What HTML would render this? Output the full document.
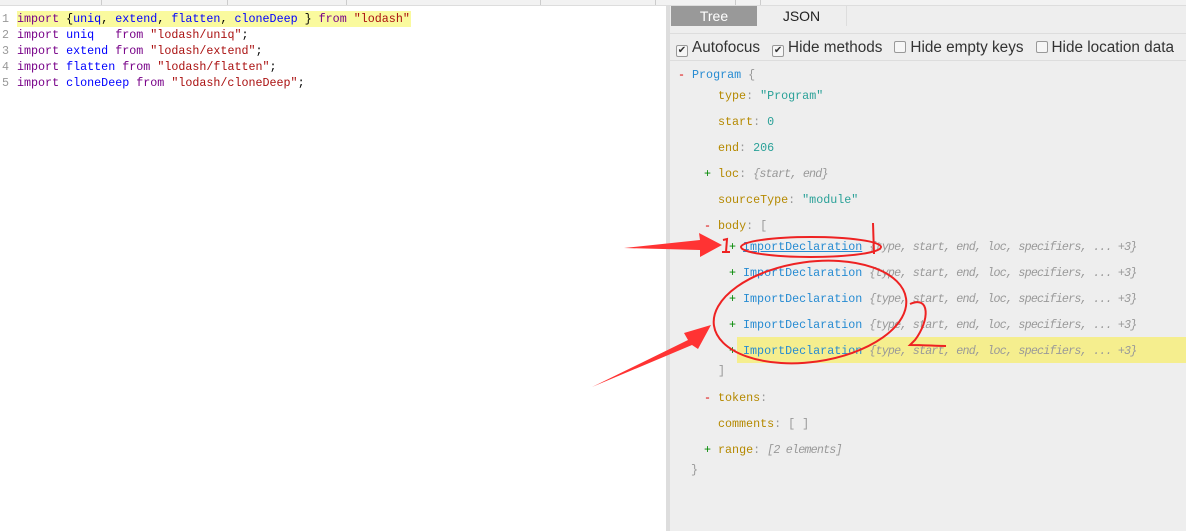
<!DOCTYPE html>
<html><head><meta charset="utf-8"><style>
*{margin:0;padding:0;box-sizing:border-box}
body{width:1186px;height:531px;position:relative;overflow:hidden;background:#fff;font-family:"Liberation Mono",monospace;font-size:11.7px}
.top{position:absolute;left:0;top:0;width:1186px;height:6px;background:#f2f2f2;border-bottom:1px solid #ddd}
.sep{position:absolute;top:0;width:1px;height:5px;background:#ccc}
.code{position:absolute;left:0;top:11px;width:666px}
.cl{height:16px;line-height:16px;white-space:pre;position:relative}
.ln{display:inline-block;width:17px;padding-left:2px;color:#999}
.k{color:#708}.v{color:#00f}.s{color:#a11}
.hl1{position:absolute;left:17px;top:0;width:394px;height:16px;background:#fafa9e}
.div{position:absolute;left:666px;top:6px;width:4px;height:525px;background:#ddd}
.right{position:absolute;left:670px;top:6px;width:516px;height:525px;background:#eee}
.tab{position:absolute;top:0;height:20px;line-height:20px;text-align:center;font-family:"Liberation Sans",sans-serif;font-size:14px}
.opts{position:absolute;left:0;top:27px;width:516px;height:28px;border-top:1px solid #ddd;border-bottom:1px solid #ddd;font-family:"Liberation Sans",sans-serif;font-size:15.3px;color:#333;line-height:28px;white-space:nowrap}
.cb{display:inline-block;width:12px;height:12px;border:1px solid #999;border-radius:2px;background:#f6f6f6;vertical-align:-1px;margin:0 4px 0 12px;position:relative;font-size:10px;line-height:10px;text-align:center;color:#333}
.cb.f{margin-left:6px}
.t{position:absolute;white-space:pre;line-height:16px}
.key{color:#b58900}.str{color:#2aa198}.n{color:#2aa198}.nm{color:#268bd2}.p{color:#999}.g{color:#999;font-style:italic;letter-spacing:-0.8px}
.m{color:#d00}.pl{color:#080}
</style></head><body>
<div class="top"></div>
<div class="sep" style="left:101px"></div><div class="sep" style="left:227px"></div><div class="sep" style="left:346px"></div><div class="sep" style="left:540px"></div><div class="sep" style="left:655px"></div><div class="sep" style="left:735px"></div><div class="sep" style="left:760px"></div>
<div class="code">
<div class="cl"><div class="hl1"></div><span style="position:relative"><span class="ln">1</span><span class="k">import</span> {<span class="v">uniq</span>, <span class="v">extend</span>, <span class="v">flatten</span>, <span class="v">cloneDeep</span> } <span class="k">from</span> <span class="s">"lodash"</span></span></div>
<div class="cl"><span class="ln">2</span><span class="k">import</span> <span class="v">uniq</span>   <span class="k">from</span> <span class="s">"lodash/uniq"</span>;</div>
<div class="cl"><span class="ln">3</span><span class="k">import</span> <span class="v">extend</span> <span class="k">from</span> <span class="s">"lodash/extend"</span>;</div>
<div class="cl"><span class="ln">4</span><span class="k">import</span> <span class="v">flatten</span> <span class="k">from</span> <span class="s">"lodash/flatten"</span>;</div>
<div class="cl"><span class="ln">5</span><span class="k">import</span> <span class="v">cloneDeep</span> <span class="k">from</span> <span class="s">"lodash/cloneDeep"</span>;</div>
</div>
<div class="div"></div>
<div class="right">
<div class="tab" style="left:1px;width:86px;background:#999;color:#fff">Tree</div>
<div class="tab" style="left:87px;width:90px;color:#222;border-right:1px solid #ddd">JSON</div>
<div class="opts"><span class="cb f">✔</span>Autofocus<span class="cb">✔</span>Hide methods<span class="cb"></span>Hide empty keys<span class="cb"></span>Hide location data</div>
<div style="position:absolute;left:67px;top:331px;width:449px;height:26px;background:#f5ee8e"></div>
</div>
<div class="t" style="left:678px;top:67px"><span class="m">-</span> <span class="nm">Program</span> <span class="p">{</span></div>
<div class="t" style="left:718px;top:88px"><span class="key">type</span><span class="p">:</span> <span class="str">"Program"</span></div>
<div class="t" style="left:718px;top:114px"><span class="key">start</span><span class="p">:</span> <span class="n">0</span></div>
<div class="t" style="left:718px;top:140px"><span class="key">end</span><span class="p">:</span> <span class="n">206</span></div>
<div class="t" style="left:704px;top:166px"><span class="pl">+</span> <span class="key">loc</span><span class="p">:</span> <span class="g">{start, end}</span></div>
<div class="t" style="left:718px;top:192px"><span class="key">sourceType</span><span class="p">:</span> <span class="str">"module"</span></div>
<div class="t" style="left:704px;top:218px"><span class="m">-</span> <span class="key">body</span><span class="p">:</span> <span class="p">[</span></div>
<div class="t" style="left:729px;top:239px"><span class="pl">+</span> <span class="nm" style="text-decoration:underline">ImportDeclaration</span> <span class="g">{type, start, end, loc, specifiers, ... +3}</span></div>
<div class="t" style="left:729px;top:265px"><span class="pl">+</span> <span class="nm">ImportDeclaration</span> <span class="g">{type, start, end, loc, specifiers, ... +3}</span></div>
<div class="t" style="left:729px;top:291px"><span class="pl">+</span> <span class="nm">ImportDeclaration</span> <span class="g">{type, start, end, loc, specifiers, ... +3}</span></div>
<div class="t" style="left:729px;top:317px"><span class="pl">+</span> <span class="nm">ImportDeclaration</span> <span class="g">{type, start, end, loc, specifiers, ... +3}</span></div>
<div class="t" style="left:729px;top:343px"><span class="pl">+</span> <span class="nm">ImportDeclaration</span> <span class="g">{type, start, end, loc, specifiers, ... +3}</span></div>
<div class="t" style="left:718px;top:363px"><span class="p">]</span></div>
<div class="t" style="left:704px;top:390px"><span class="m">-</span> <span class="key">tokens</span><span class="p">:</span></div>
<div class="t" style="left:718px;top:416px"><span class="key">comments</span><span class="p">:</span> <span class="p">[ ]</span></div>
<div class="t" style="left:704px;top:442px"><span class="pl">+</span> <span class="key">range</span><span class="p">:</span> <span class="g">[2 elements]</span></div>
<div class="t" style="left:691px;top:462px"><span class="p">}</span></div>
<svg style="position:absolute;left:0;top:0" width="1186" height="531">
<g fill="#f33">
<polygon points="624,248 700,240 699,233 722,245 700,257 700,250"/>
<polygon points="592,387 688,340 684,333 711,325 698,349 692,345"/>
</g>
<g fill="none" stroke="#e22" stroke-width="2">
<ellipse cx="811" cy="247" rx="70" ry="10"/>
<ellipse cx="810" cy="312" rx="97" ry="50" transform="rotate(-8 810 312)"/>
<path d="M873 223 L874 254"/>
<path d="M910 304 C930 295 930 320 915 340 L910 345 C925 345 935 346 946 346"/>
<path d="M723 240 L727 239 L726 252 M722 252 L730 252"/>
</g>
</svg>
</body></html>
